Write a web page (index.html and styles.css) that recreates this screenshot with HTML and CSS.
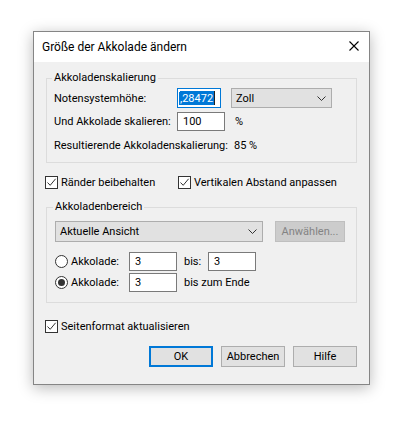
FILE: index.html
```
<!DOCTYPE html>
<html lang="de">
<head>
<meta charset="utf-8">
<title>Größe der Akkolade ändern</title>
<link rel="stylesheet" href="styles.css">
</head>
<body>
<div class="stage">
  <div class="dialog">
    <div class="titlebar">
      <span class="title">Größe der Akkolade ändern</span>
      <svg class="close" width="10" height="10" viewBox="0 0 10 10"><path d="M0.5 0.5 L9.5 9.5 M9.5 0.5 L0.5 9.5" stroke="#000" stroke-width="1.1" fill="none"/></svg>
    </div>
    <div class="content">
      <fieldset class="group g1">
        <legend>Akkoladenskalierung</legend>
        <div class="row r1">
          <span class="lbl w123">Notensystemhöhe:</span>
          <div class="edit focus w44"><span class="sliver"></span><span class="sel">,28472</span><span class="caret"></span></div>
          <div class="combo w101"><span class="ctext">Zoll</span><svg class="chev" width="9" height="5" viewBox="0 0 9 5"><path d="M0.5 0.5 L4.5 4.5 L8.5 0.5" stroke="#333" fill="none"/></svg></div>
        </div>
        <div class="row r2">
          <span class="lbl w123">Und Akkolade skalieren:</span>
          <div class="edit w48 h19"><span class="etext">100</span></div>
          <span class="lbl pct">%</span>
        </div>
        <div class="row r3">
          <span class="lbl w180">Resultierende Akkoladenskalierung:</span>
          <span class="lbl">85 %</span>
        </div>
      </fieldset>

      <div class="checks">
        <label class="check c1"><span class="box"><svg width="11" height="11" viewBox="0 0 11 11"><path d="M1.5 5.5 L4.2 8.3 L9.6 1.8" stroke="#333" stroke-width="1" fill="none"/></svg></span><span>Ränder beibehalten</span></label>
        <label class="check c2"><span class="box"><svg width="11" height="11" viewBox="0 0 11 11"><path d="M1.5 5.5 L4.2 8.3 L9.6 1.8" stroke="#333" stroke-width="1" fill="none"/></svg></span><span>Vertikalen Abstand anpassen</span></label>
      </div>

      <fieldset class="group g2">
        <legend>Akkoladenbereich</legend>
        <div class="row r4">
          <div class="combo w208 h21"><span class="ctext">Aktuelle Ansicht</span><svg class="chev" width="9" height="5" viewBox="0 0 9 5"><path d="M0.5 0.5 L4.5 4.5 L8.5 0.5" stroke="#333" fill="none"/></svg></div>
          <div class="btn disabled">Anwählen...</div>
        </div>
        <div class="row r5">
          <span class="radio"></span>
          <span class="lbl rl">Akkolade:</span>
          <div class="edit w48 h19"><span class="etext">3</span></div>
          <span class="lbl bis">bis:</span>
          <div class="edit w48 h19"><span class="etext">3</span></div>
        </div>
        <div class="row r6">
          <span class="radio on"><span class="dot"></span></span>
          <span class="lbl rl">Akkolade:</span>
          <div class="edit w48 h19"><span class="etext">3</span></div>
          <span class="lbl bis">bis zum Ende</span>
        </div>
      </fieldset>

      <label class="check c3"><span class="box"><svg width="11" height="11" viewBox="0 0 11 11"><path d="M1.5 5.5 L4.2 8.3 L9.6 1.8" stroke="#333" stroke-width="1" fill="none"/></svg></span><span>Seitenformat aktualisieren</span></label>

      <div class="buttons">
        <div class="btn default">OK</div>
        <div class="btn">Abbrechen</div>
        <div class="btn">Hilfe</div>
      </div>
    </div>
  </div>
</div>
</body>
</html>
```
FILE: styles.css
```
* { box-sizing: border-box; }
html, body { margin: 0; padding: 0; background: #fff; }
body {
  width: 404px;
  height: 426px;
  overflow: hidden;
  font-family: "Segoe UI", Roboto, sans-serif;
  font-size: 11px;
  color: #000;
}
.stage { padding: 31px 0 0 33px; }
.dialog {
  width: 337px;
  height: 354px;
  border: 1px solid #858585;
  background: #f0f0f0;
  box-shadow: 0 3px 14px rgba(0,0,0,0.28);
}
.titlebar {
  height: 30px;
  background: #fff;
  display: flex;
  align-items: center;
  justify-content: space-between;
  padding: 0 10px 0 8px;
}
.title { font-size: 12px; line-height: 15px; }
.close { display: block; margin-top: -2px; }

.content {
  padding: 9px 12px 0 12px;
  display: flex;
  flex-direction: column;
}
.group {
  margin: 0;
  border: 1px solid #dcdcdc;
  min-width: 0;
}
.group legend {
  padding: 0 2px;
  margin-left: -2px;
  line-height: 14px;
}
.g1 { padding: 3px 7px 9px 7px; }
.g2 { padding: 7px 8px 10px 8px; margin-top: 11px; }

.row { display: flex; align-items: center; }
.lbl { white-space: nowrap; line-height: 15px; }
.w123 { width: 123px; flex: none; }
.w180 { width: 180px; flex: none; }
.r1 { height: 20px; }
.r2 { height: 19px; margin-top: 4px; }
.r3 { height: 15px; margin-top: 7px; }
.pct { margin-left: 10px; }

.edit {
  height: 20px;
  background: #fff;
  border: 1px solid #7a7a7a;
  display: flex;
  align-items: center;
  overflow: hidden;
  flex: none;
}
.edit.h19 { height: 19px; }
.edit.focus { border-color: #0078d7; }
.w44 { width: 44px; }
.w48 { width: 48px; }
.etext { padding-left: 5px; line-height: 15px; }
.sliver { width: 1px; height: 13px; background: #0078d7; margin-left: 1px; flex: none; }
.sel {
  background: #0078d7;
  color: #fff;
  line-height: 15px;
  height: 14px;
  display: flex;
  align-items: center;
  flex: none;
  padding-right: 1px;
}
.caret { width: 1px; height: 14px; background: #222; flex: none; }

.combo {
  height: 20px;
  background: #e1e1e1;
  border: 1px solid #adadad;
  display: flex;
  align-items: center;
  justify-content: space-between;
  padding: 0 5px 0 4px;
  flex: none;
  margin-left: 10px;
}
.w101 { width: 101px; }
.w208 { width: 208px; margin-left: 0; }
.h21 { height: 21px; }
.ctext { line-height: 15px; }
.chev { display: block; }

.checks {
  display: flex;
  margin-top: 13px;
  margin-left: -1px;
  height: 13px;
  align-items: center;
}
.check { display: flex; align-items: center; white-space: nowrap; }
.c1 { width: 133px; flex: none; }
.box {
  width: 13px;
  height: 13px;
  border: 1px solid #333;
  background: #fff;
  display: flex;
  align-items: center;
  justify-content: center;
  margin-right: 3px;
  flex: none;
}
.box svg { display: block; }
.c3 { margin-top: 17px; margin-left: -1px; height: 13px; }

.r4 { height: 21px; }
.r5 { margin-top: 10px; height: 19px; }
.r6 { margin-top: 2px; height: 19px; }
.radio {
  width: 13px;
  height: 13px;
  border: 1px solid #333;
  border-radius: 50%;
  background: #fff;
  flex: none;
  display: flex;
  align-items: center;
  justify-content: center;
}
.dot { width: 7px; height: 7px; border-radius: 50%; background: #333; }
.rl { width: 61px; padding-left: 3px; flex: none; }
.bis { margin-left: 7px; width: 24px; flex: none; }
.r6 .bis { width: auto; }

.btn {
  height: 21px;
  width: 64px;
  background: #e1e1e1;
  border: 1px solid #adadad;
  display: flex;
  align-items: center;
  justify-content: center;
  line-height: 15px;
  flex: none;
}
.btn.disabled {
  width: 70px;
  margin-left: 12px;
  background: #cccccc;
  border-color: #bfbfbf;
  color: #838383;
}
.btn.default { border: 2px solid #0078d7; }
.buttons {
  display: flex;
  justify-content: flex-end;
  gap: 8px;
  margin-top: 13px;
}
```
